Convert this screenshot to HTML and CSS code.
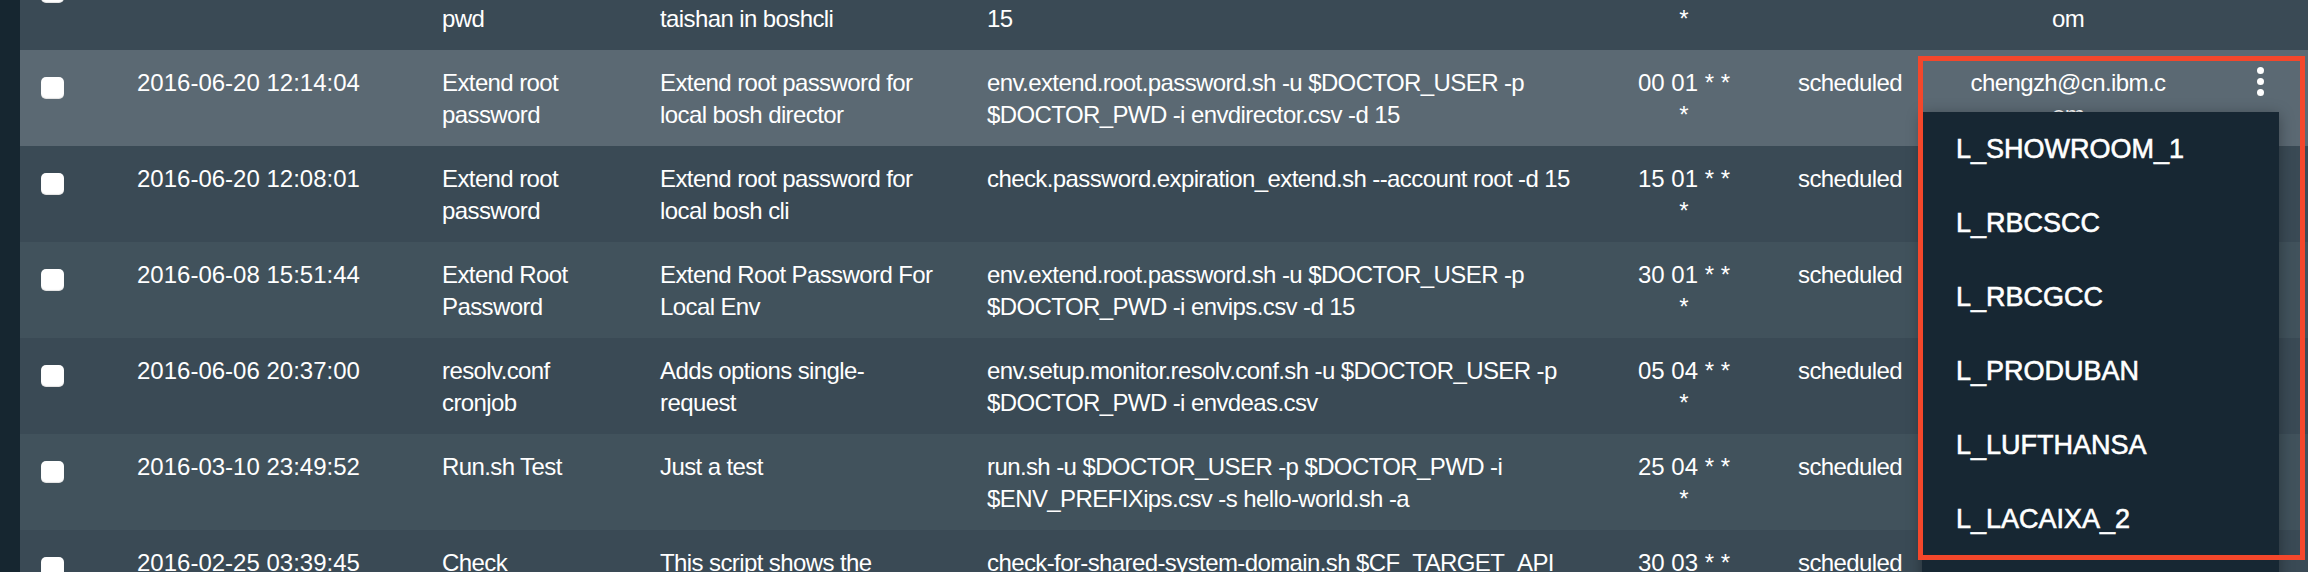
FILE: index.html
```html
<!DOCTYPE html>
<html lang="en">
<head>
<meta charset="utf-8">
<title>Scheduled jobs</title>
<link rel="stylesheet" href="styles.css">
</head>
<body>
<div class="app">
  <aside class="rail"></aside>
  <main class="jobs">
    <div class="row">
      <div class="cell check"><span class="box"></span></div>
      <div class="cell date">2016-06-20 12:20:11</div>
      <div class="cell name">Extend root pwd</div>
      <div class="cell desc">Extend root password for taishan in boshcli</div>
      <div class="cell cmd">check.password.expiration_extend.sh --account root --days 15</div>
      <div class="cell cron">20 01 * * *</div>
      <div class="cell status">scheduled</div>
      <div class="cell email">chengzh@cn.ibm.com</div>
      <div class="cell more"></div>
    </div>
    <div class="row hover">
      <div class="cell check"><span class="box"></span></div>
      <div class="cell date">2016-06-20 12:14:04</div>
      <div class="cell name">Extend root password</div>
      <div class="cell desc">Extend root password for local bosh director</div>
      <div class="cell cmd">env.extend.root.password.sh -u $DOCTOR_USER -p $DOCTOR_PWD -i envdirector.csv -d 15</div>
      <div class="cell cron">00 01 * * *</div>
      <div class="cell status">scheduled</div>
      <div class="cell email">chengzh@cn.ibm.com</div>
      <div class="cell more"><span class="kebab"><i></i><i></i><i></i></span></div>
    </div>
    <div class="row">
      <div class="cell check"><span class="box"></span></div>
      <div class="cell date">2016-06-20 12:08:01</div>
      <div class="cell name">Extend root password</div>
      <div class="cell desc">Extend root password for local bosh cli</div>
      <div class="cell cmd">check.password.expiration_extend.sh --account root -d 15</div>
      <div class="cell cron">15 01 * * *</div>
      <div class="cell status">scheduled</div>
      <div class="cell email">chengzh@cn.ibm.com</div>
      <div class="cell more"></div>
    </div>
    <div class="row even">
      <div class="cell check"><span class="box"></span></div>
      <div class="cell date">2016-06-08 15:51:44</div>
      <div class="cell name">Extend Root Password</div>
      <div class="cell desc">Extend Root Password For Local Env</div>
      <div class="cell cmd">env.extend.root.password.sh -u $DOCTOR_USER -p $DOCTOR_PWD -i envips.csv -d 15</div>
      <div class="cell cron">30 01 * * *</div>
      <div class="cell status">scheduled</div>
      <div class="cell email">chengzh@cn.ibm.com</div>
      <div class="cell more"></div>
    </div>
    <div class="row">
      <div class="cell check"><span class="box"></span></div>
      <div class="cell date">2016-06-06 20:37:00</div>
      <div class="cell name">resolv.conf cronjob</div>
      <div class="cell desc">Adds options single-request</div>
      <div class="cell cmd">env.setup.monitor.resolv.conf.sh -u $DOCTOR_USER -p $DOCTOR_PWD -i envdeas.csv</div>
      <div class="cell cron">05 04 * * *</div>
      <div class="cell status">scheduled</div>
      <div class="cell email">chengzh@cn.ibm.com</div>
      <div class="cell more"></div>
    </div>
    <div class="row even">
      <div class="cell check"><span class="box"></span></div>
      <div class="cell date">2016-03-10 23:49:52</div>
      <div class="cell name">Run.sh Test</div>
      <div class="cell desc">Just a test</div>
      <div class="cell cmd">run.sh -u $DOCTOR_USER -p $DOCTOR_PWD -i $ENV_PREFIXips.csv -s hello-world.sh -a</div>
      <div class="cell cron">25 04 * * *</div>
      <div class="cell status">scheduled</div>
      <div class="cell email">chengzh@cn.ibm.com</div>
      <div class="cell more"></div>
    </div>
    <div class="row">
      <div class="cell check"><span class="box"></span></div>
      <div class="cell date">2016-02-25 03:39:45</div>
      <div class="cell name">Check domains</div>
      <div class="cell desc">This script shows the shared system domain</div>
      <div class="cell cmd">check-for-shared-system-domain.sh $CF_TARGET_API $CF_USER</div>
      <div class="cell cron">30 03 * * *</div>
      <div class="cell status">scheduled</div>
      <div class="cell email">chengzh@cn.ibm.com</div>
      <div class="cell more"></div>
    </div>
  </main>
</div>

<ul class="menu">
  <li>L_SHOWROOM_1</li>
  <li>L_RBCSCC</li>
  <li>L_RBCGCC</li>
  <li>L_PRODUBAN</li>
  <li>L_LUFTHANSA</li>
  <li>L_LACAIXA_2</li>
  <li>L_ALLIANZ</li>
</ul>
<div class="annotation"></div>
</body>
</html>
```

FILE: styles.css
```css
html, body {
  margin: 0;
  padding: 0;
}
body {
  width: 2308px;
  height: 572px;
  overflow: hidden;
  background: #3a4a55;
  font-family: "Liberation Sans", Arial, Helvetica, sans-serif;
  color: #ffffff;
  position: relative;
}
.app {
  display: flex;
  height: 572px;
}
.rail {
  width: 20px;
  flex: none;
  background: #162630;
}
.jobs {
  flex: 1;
  margin-top: -46px;
}
.row {
  display: grid;
  grid-template-columns: 117px 305px 218px 327px 647px 164px 169px 202px 1fr;
  height: 96px;
  background: #3a4a55;
}
.row.even {
  background: #41525c;
}
.row.hover {
  background: #5b6973;
}
.cell {
  padding-top: 17px;
  font-size: 24px;
  line-height: 32px;
  letter-spacing: -0.6px;
  box-sizing: border-box;
}
.check {
  padding-top: 27px;
  padding-left: 21px;
}
.box {
  display: block;
  width: 23px;
  height: 22px;
  background: #ffffff;
  border-radius: 5px;
  box-shadow: inset 0 -1px 1px rgba(0, 0, 0, 0.12);
}
.date {
  letter-spacing: 0;
}
.name {
  width: 150px;
}
.desc {
  width: 276px;
}
.cmd {
  width: 625px;
}
.cron {
  width: 100px;
  text-align: center;
  letter-spacing: 0;
}
.email {
  text-align: center;
  word-break: break-all;
}
.more {
  padding-top: 17px;
  padding-left: 88px;
}
.kebab {
  display: flex;
  flex-direction: column;
  gap: 4px;
  width: 7px;
}
.kebab i {
  display: block;
  width: 7px;
  height: 7px;
  border-radius: 50%;
  background: #ffffff;
}
.menu {
  position: absolute;
  left: 1922px;
  top: 112px;
  width: 357px;
  margin: 0;
  padding: 0;
  list-style: none;
  background: #172733;
  box-shadow: 0 3px 14px rgba(0, 0, 0, 0.35);
  z-index: 2;
}
.menu li {
  height: 74px;
  line-height: 74px;
  padding-left: 34px;
  font-size: 27px;
  color: #ffffff;
  -webkit-text-stroke: 0.6px #ffffff;
}
.annotation {
  position: absolute;
  left: 1918px;
  top: 56px;
  width: 387px;
  height: 504px;
  box-sizing: border-box;
  border: 5px solid #f4472b;
  z-index: 3;
}
```
